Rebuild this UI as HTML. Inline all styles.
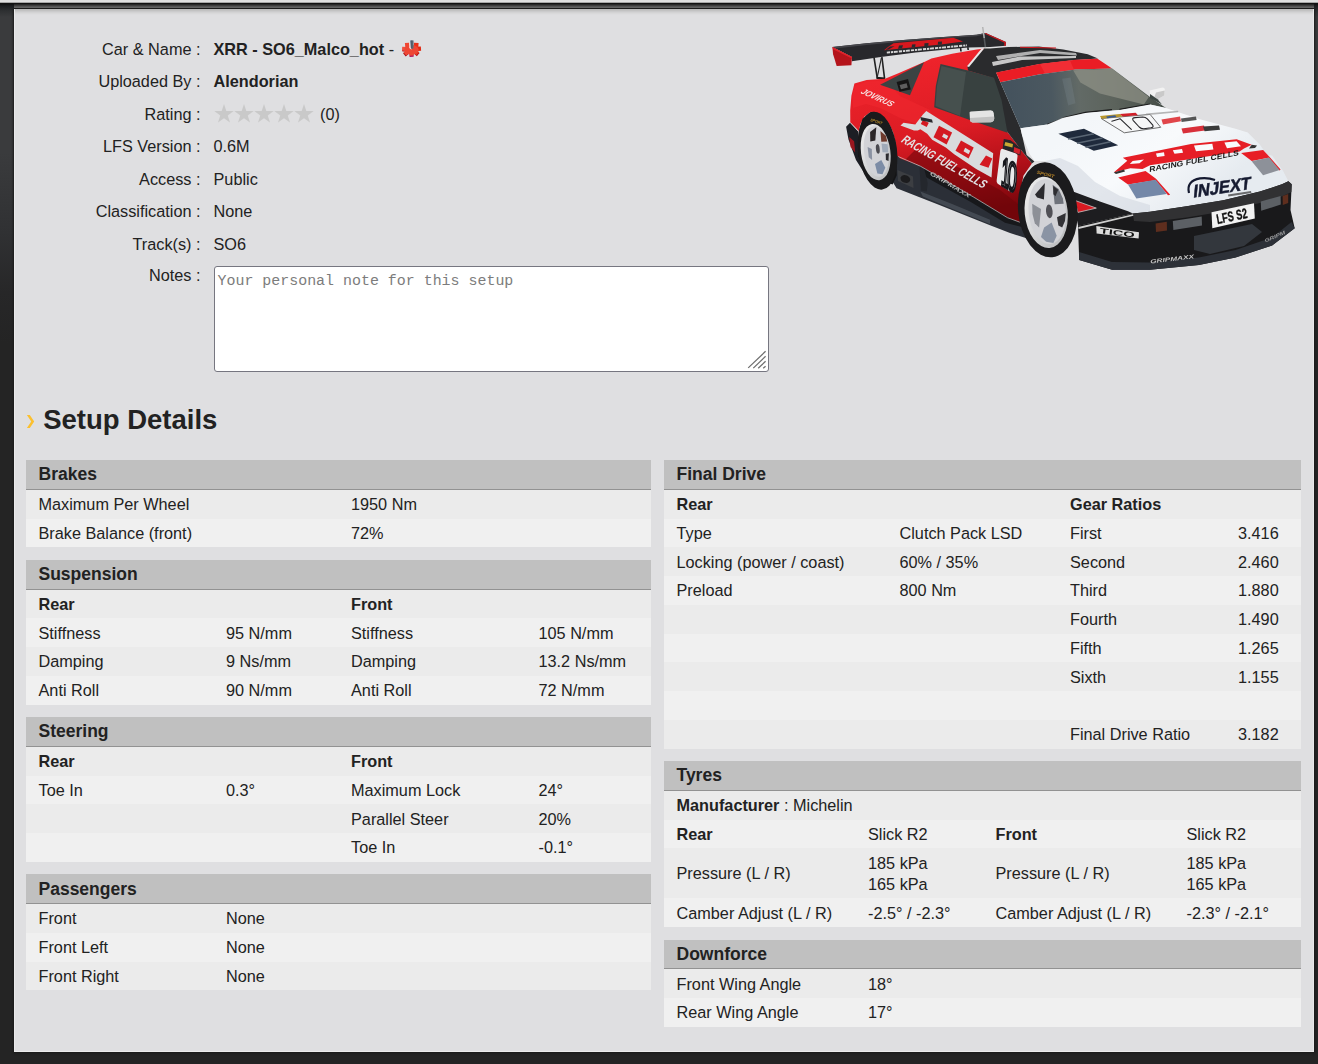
<!DOCTYPE html>
<html>
<head>
<meta charset="utf-8">
<title>Setup</title>
<style>
*{box-sizing:border-box;margin:0;padding:0}
html,body{width:1318px;height:1064px;overflow:hidden;background:#242424}
body{font-family:"Liberation Sans",sans-serif;font-size:16.25px;color:#222;position:relative;line-height:21.25px}
#topbar{position:absolute;z-index:3;left:0;top:0;width:1318px;height:4px;background:linear-gradient(to bottom,#dedede 0px,#dedede 1px,#e0e0e0 1px,#e0e0e0 2px,#a6a6a6 2px,#a6a6a6 3px,#111 3px,#111 4px)}
#topbar2{position:absolute;z-index:3;left:14px;top:4px;width:1300px;height:5px;background:linear-gradient(to bottom,#282828 0px,#282828 1px,#3d3d3d 1px,#3d3d3d 2px,#535353 2px,#535353 3px,#616161 3px,#616161 4px,#1c1c1c 4px,#1c1c1c 5px)}
#lstrip{position:absolute;left:0;top:3px;width:14px;height:1061px;background:linear-gradient(to bottom,#0a0a0a 0,#1c1e20 3px,#2e3032 8px,#3a3b3d 14px,#3a3b3d 150px,#303133 230px,#272728 290px,#242424 340px,#242424 100%)}
#rstrip{position:absolute;left:1314px;top:3px;width:4px;height:1061px;background:linear-gradient(to bottom,#0a0a0a 0,#1c1e20 3px,#2e3032 8px,#3a3b3d 14px,#3a3b3d 150px,#303133 230px,#272728 290px,#242424 340px,#242424 100%)}
#content{position:absolute;left:14px;top:9px;width:1300px;height:1043px;background:#dfdfe1;border-left:1px solid #e9e9ea;border-right:1px solid #e9e9ea;border-bottom:1px solid #ececed;box-shadow:0 0 2px 1px #1a1a1a}
#cshadow{position:absolute;left:15px;top:9px;width:1298px;height:6px;background:linear-gradient(to bottom,#bcbcbc 0px,#bcbcbc 1px,#c2c2c2 1px,#c2c2c2 2px,#cbcbcc 2px,#cbcbcc 3px,#d3d3d4 3px,#d3d3d4 4px,#d9d9da 4px,#d9d9da 5px,#dddddf 5px,#dddddf 6px)}
.lbl{position:absolute;left:14px;width:186.5px;text-align:right;white-space:nowrap}
.val{position:absolute;left:213.5px;white-space:nowrap}
b{font-weight:bold}
#notes{position:absolute;left:214px;top:266px;width:555px;height:105.5px;background:#fff;border:1px solid #767680;border-radius:3px}
#notes span{position:absolute;left:2.5px;top:4.4px;font-family:"Liberation Mono",monospace;font-size:14.95px;color:#7c7c7c;white-space:nowrap;line-height:20px}
h2{position:absolute;left:43.2px;top:403px;font-size:27.5px;line-height:34px;font-weight:bold;color:#222;white-space:nowrap}
h2 i{font-style:normal;color:#f7b32b;font-weight:bold;margin-right:6px}
table{position:absolute;border-collapse:separate;border-spacing:0;table-layout:fixed}
table.l{left:26px;width:625px}
table.r{left:664px;width:637px}
th{background:#c0c0c0;height:29.6875px;text-align:left;padding:0 12.5px 0.3px 12.5px;font-size:17.5px;font-weight:bold;border-bottom:1px solid #929292;vertical-align:middle;line-height:20px}
td{height:28.75px;padding:4.25px 0 3.25px 12.5px;line-height:21.25px;vertical-align:middle;white-space:nowrap;overflow:hidden}
tr.a td{background:#ebebeb}
tr.b td{background:#f0f0f0}
</style>
</head>
<body>
<div id="topbar"></div><div id="topbar2"></div>
<div id="lstrip"></div>
<div id="rstrip"></div>
<div id="content"></div>
<div id="cshadow"></div>

<div class="lbl" style="top:38.5px">Car &amp; Name :</div><div class="val" style="top:38.5px"><b>XRR - SO6_Malco_hot</b> -</div>
<div class="lbl" style="top:71px">Uploaded By :</div><div class="val" style="top:71px"><b>Alendorian</b></div>
<div class="lbl" style="top:103.5px">Rating :</div><div class="val" style="top:103.5px;left:320px">(0)</div>
<div class="lbl" style="top:136px">LFS Version :</div><div class="val" style="top:136px">0.6M</div>
<div class="lbl" style="top:168.5px">Access :</div><div class="val" style="top:168.5px">Public</div>
<div class="lbl" style="top:201px">Classification :</div><div class="val" style="top:201px">None</div>
<div class="lbl" style="top:233.5px">Track(s) :</div><div class="val" style="top:233.5px">SO6</div>
<div class="lbl" style="top:265px">Notes :</div>
<div id="notes"><span>Your personal note for this setup</span></div>

<svg style="position:absolute;left:210px;top:98px" width="110" height="32" viewBox="210 98 110 32"><g fill="#c9c9c9"><polygon points="224.00,104.00 226.32,111.00 233.70,111.05 227.76,115.42 230.00,122.45 224.00,118.15 218.00,122.45 220.24,115.42 214.30,111.05 221.68,111.00"/><polygon points="244.00,104.00 246.32,111.00 253.70,111.05 247.76,115.42 250.00,122.45 244.00,118.15 238.00,122.45 240.24,115.42 234.30,111.05 241.68,111.00"/><polygon points="264.00,104.00 266.32,111.00 273.70,111.05 267.76,115.42 270.00,122.45 264.00,118.15 258.00,122.45 260.24,115.42 254.30,111.05 261.68,111.00"/><polygon points="284.00,104.00 286.32,111.00 293.70,111.05 287.76,115.42 290.00,122.45 284.00,118.15 278.00,122.45 280.24,115.42 274.30,111.05 281.68,111.00"/><polygon points="304.00,104.00 306.32,111.00 313.70,111.05 307.76,115.42 310.00,122.45 304.00,118.15 298.00,122.45 300.24,115.42 294.30,111.05 301.68,111.00"/></g></svg>
<svg style="position:absolute;left:396px;top:36px" width="32" height="26" viewBox="396 36 32 26"><defs><linearGradient id="gp" x1="0" y1="0" x2="1" y2="0"><stop offset="0" stop-color="#8aa6ba"/><stop offset="0.4" stop-color="#505c68"/><stop offset="1" stop-color="#5f6f7c"/></linearGradient></defs><g stroke-width="4.1" fill="none"><path d="M411.5 52 L411.6 56.9" stroke="#b3105a"/><path d="M409 51 L404.4 54.9" stroke="#a80c14"/><path d="M414 51 L418.2 54.6" stroke="#b8101a"/><path d="M411.5 51.2 L411.6 55.6" stroke="#f04a36"/><path d="M409 50.6 L404.9 54.0" stroke="#ee4a38"/><path d="M414 50.6 L417.8 53.8" stroke="#e8381e"/><path d="M408 49.2 L402.1 49.0" stroke="#ef5040" stroke-width="4.4"/><path d="M415 49.0 L421.0 48.6" stroke="#e02a12" stroke-width="4.4"/><path d="M404.9 43.1 L409.2 42.7 L409.6 48 L405.4 48.6Z" fill="#f04632" stroke="none"/><path d="M413.9 42.7 L418.6 43.1 L418.2 48.6 L413.7 48Z" fill="#ea3018" stroke="none"/></g><ellipse cx="411.5" cy="49.8" rx="7.2" ry="4.8" fill="#ee4634"/><path d="M402.4 50.6 L404.6 50.9 L404.6 51.6 L402.4 51.2Z" fill="#9a0a1a"/><path d="M409.2 42.6 L409.2 47.6 Q409.5 49.5 411.6 49.4 L411.6 42.6 Z" fill="#f8dcd6"/><path d="M409.9 40.6 Q411.8 39.7 413.6 40.6 L413.5 48.3 Q411.9 49.4 410.8 48.3 Z" fill="url(#gp)"/></svg>
<svg style="position:absolute;left:744px;top:347px" width="24" height="24" viewBox="744 347 24 24"><g stroke="#6e6e6e" stroke-width="1.25" fill="none"><path d="M748.2 367.9 L765.6 351.3"/><path d="M753.3 368.1 L765.6 356.3"/><path d="M758.2 368.3 L765.6 361.3"/><path d="M763.2 368.3 L765.6 366.2"/></g></svg>
<svg style="position:absolute;left:20px;top:405px" width="30" height="30" viewBox="20 405 30 30"><polygon points="26.9,414.9 29.8,414.9 34.2,421.45 29.8,428 26.9,428 31.2,421.45" fill="#fbc02f"/></svg>
<h2>Setup Details</h2>

<!--CAR-->
<svg id="car" style="position:absolute;left:820px;top:20px;filter:blur(0.45px)" width="494" height="270" viewBox="820 20 494 270">
<defs>
<linearGradient id="redb" gradientUnits="userSpaceOnUse" x1="930" y1="60" x2="960" y2="215"><stop offset="0" stop-color="#ee232b"/><stop offset="0.45" stop-color="#dc1c24"/><stop offset="0.75" stop-color="#b01018"/><stop offset="1" stop-color="#7a060c"/></linearGradient>
<linearGradient id="hood" gradientUnits="userSpaceOnUse" x1="1100" y1="110" x2="1180" y2="215"><stop offset="0" stop-color="#f3f6f9"/><stop offset="0.5" stop-color="#f8fafc"/><stop offset="1" stop-color="#e6ebf0"/></linearGradient>
<linearGradient id="wind" gradientUnits="userSpaceOnUse" x1="1005" y1="100" x2="1160" y2="90"><stop offset="0" stop-color="#44525d"/><stop offset="0.3" stop-color="#4b5860"/><stop offset="0.48" stop-color="#626a66"/><stop offset="0.7" stop-color="#5c635c"/><stop offset="0.9" stop-color="#4e5650"/><stop offset="1" stop-color="#464e48"/></linearGradient>
<linearGradient id="rim" x1="0" y1="0" x2="1" y2="1"><stop offset="0" stop-color="#f2f2f2"/><stop offset="1" stop-color="#b4b6b8"/></linearGradient>
<linearGradient id="bump" gradientUnits="userSpaceOnUse" x1="0" y1="200" x2="0" y2="270"><stop offset="0" stop-color="#2c2c2e"/><stop offset="0.5" stop-color="#1a1a1c"/><stop offset="1" stop-color="#30343a"/></linearGradient>
</defs>

<!-- antenna -->

<!-- wing struts -->
<g stroke="#222" stroke-width="1.6" fill="none"><path d="M874 57.4 L877.2 77.5"/><path d="M881.9 57 L884.6 78.7"/><path d="M881.4 57.8 L877.4 76.5" stroke-width="1.1"/><path d="M960.6 48 L961 51.5"/><path d="M967.8 47.2 L968.2 50"/></g>
<path d="M876.4 76.7 L885 77.6 L885 79.8 L876.4 79Z" fill="#1c1c1c"/>
<!-- rear wing -->
<path d="M832.4 47 L866.6 43.3 L903.3 39.9 L939.9 37.2 L976.6 34.8 L985.6 32.9 L1006 42 L1005.8 45.8 L990 47 L968 47.6 L952 48.9 L915.5 52.4 L878.9 57.3 L852 61.3 L852 57Z" fill="#28282c"/>
<path d="M832.4 47 L866.6 43.3 L903.3 39.9 L939.9 37.2 L976.6 34.8 L985.6 32.9 L987.6 33.8 L976.6 36.2 L939.9 38.6 L903.3 41.4 L866.6 44.9 L835 48.4Z" fill="#45454a"/>
<path d="M985.6 32.9 L1006 42 L1005.8 45.8 L1004.2 45.9 L1004.4 42.8 L984.8 33.8Z" fill="#d01a20"/>
<!-- wing decals -->
<path d="M893.5 43.3 L953.4 37.7 L963 41.4 L943 44.2 L884 50.2 L888 47 Z" fill="#d8181e"/>
<g fill="#2a2a2e"><path d="M899 45.6 L903 45.2 L902 48.4 L898 48.8Z"/><path d="M912 44.6 L915.5 44.2 L915.2 47 L911.6 47.4Z"/><path d="M924.5 43.3 L928.5 42.9 L928.3 45.8 L924.3 46.2Z"/><path d="M938 41.8 L942 41.4 L941.8 44.4 L937.8 44.8Z"/><path d="M890 46.6 L894.5 46.2 L888.5 49.6 L885.5 49.9Z"/></g>
<path d="M886.8 52.6 L966.9 45.3" stroke="#d6d6d6" stroke-width="1.9" stroke-dasharray="3.2 0.9 2.2 0.7 4 1.1" fill="none"/>
<path d="M982.7 27 L984.2 38" stroke="#b4b4b4" stroke-width="1.5" fill="none"/><path d="M984.2 38 L985.4 47.2" stroke="#55585c" stroke-width="1.6" fill="none"/>
<!-- endplate -->
<path d="M832.4 47 L852 57 L851.4 65.3 L836.7 65.9 L833.1 54.3Z" fill="#b4141b"/>
<path d="M832.4 47 L852 57 L851.9 58.6 L833 49.2Z" fill="#e0222a"/>

<!-- rear bumper (black) -->
<path d="M846.1 126.8 L850.3 122.6 L857.9 131.0 L860.7 147.0 L868.2 175.2 L864.4 173.3 L856.0 160.1 L848.5 139.5Z" fill="#1c1e24"/>
<!-- lower skirt -->
<path d="M893 150 L898.4 156.2 L920.8 166 L973.3 196.5 L1007.5 217.3 L1024 222 L1032 240 L1010 233 L990 225.2 L940 205.3 L896.6 188.2 L889 176Z" fill="#2b2f37"/>
<path d="M920.2 164.7 L973.3 195.9 L1007.5 216.6 L1023.4 222.1 L1022.1 227.0 L1005.0 222.7 L970.8 202.0 L924.4 176.3Z" fill="#17181b"/>
<path d="M920.4 191.6 L952.1 203.9 L990.0 219.7 L990.0 224.0 L952.1 208.7 L922.8 196.5Z" fill="#4a5059" opacity="0.8"/>
<path d="M918.9 157.4 L921.8 158.2 L927.7 183.1 L926.7 191.6 L921.0 190.4Z" fill="#24272d"/>
<!-- red body -->
<path d="M854.4 83.6 L866.6 80 L885 78.7 L898.4 73.2 L925.3 61.6 L931.4 58.6 L952.1 53.7 L976.6 49.4 L984 48.6 L992 60 L996 72 L1000 90 L1006.3 130.5 L1022.1 151.3 L1031.9 163.5 L1023.4 175.7 L1020.3 192.8 L1019.1 209.9 L1021.5 222.6 L1007.5 217.3 L973.3 196.5 L920.8 166 L900 158.6 L898.4 156.2 L896.4 156 L895.4 142.3 L893 132 L888.9 123.5 L880.5 115 L871 111.7 L864.5 116.5 L860.5 124 L858.8 131 L850.3 122.5 L850.2 110.5 L851.4 95.8Z" fill="url(#redb)"/>
<!-- bright highlight on rear fender -->
<path d="M855 86 L866.6 81.5 L885 80.5 L900 96 L930 110 L933 130 L900 118 L880 108 L866 104 L853 108 L852.5 96Z" fill="#f0282f" opacity="0.55"/>
<!-- dark lower door -->
<path d="M915 150 L960 168 L1000 190 L1019 205 L1021.5 222.6 L1007.5 217.3 L973.3 196.5 L920.8 166 L905 160Z" fill="#6c050a" opacity="0.55"/>
<path d="M898.4 156.6 L920.8 166.4 L973.3 196.9 L1007.5 217.7 L1021 222.6" stroke="#d8d8d8" stroke-width="0.8" fill="none" opacity="0.8"/>
<!-- rear wheel well + tire -->
<path d="M858.8 131.0 L862.6 118.8 L871.0 111.7 L880.4 115.0 L888.9 123.5 L895.4 142.3 L896.4 155.4 L896.8 175.2 L892.6 184.6 L868.2 175.2 L858.3 156.4Z" fill="#141416"/>
<ellipse cx="877.6" cy="150.7" rx="19.4" ry="39.2" fill="#1a1a1c" transform="rotate(-6.9 877.6 150.7)"/>
<ellipse cx="875.7" cy="152.1" rx="14.7" ry="28.4" fill="url(#rim)" transform="rotate(-7.6 875.7 152.1)"/>
<ellipse cx="876.3" cy="151.6" rx="12.2" ry="25.4" fill="#d2d3d7" transform="rotate(-7.6 876.3 151.6)"/>
<path d="M870.1 132.1 L876.3 127.2 L875.3 140.6 L870.3 141.5Z" fill="#2a2628"/>
<path d="M880.4 131.0 L885.9 135.7 L887.2 141.5 L881.3 141.7Z" fill="#6e3a2c"/>
<path d="M881.5 143.4 L887.7 144.2 L888.3 152.6 L882.5 152.2Z" fill="#a0aab8"/>
<path d="M885.7 153.7 L888.9 153.2 L888.5 161.1 L885.9 160.1Z" fill="#2c2c30"/>
<path d="M875.0 164.1 L881.3 160.1 L885.3 167.8 L882.5 174.2 L877.4 173.5Z" fill="#7c8ca6"/>
<path d="M867.6 147.0 L871.8 148.9 L872.1 160.1 L868.8 157.3Z" fill="#8a92a2"/>
<ellipse cx="877.8" cy="148.9" rx="1.9" ry="4.8" fill="#4a4a50" transform="rotate(-6 877.8 148.9)"/>
<text transform="translate(869.9 120.9) rotate(17)" font-family="Liberation Sans" font-weight="bold" font-style="italic" font-size="4" fill="#b08828" textLength="12.5" lengthAdjust="spacingAndGlyphs">SPORT</text>
<path d="M850.1 122.4 L857.9 130.8" stroke="#d8d8d8" stroke-width="0.9" fill="none"/>
<path d="M849.2 137.1 L854.1 141.3 L855.2 152.6 L850.5 147.0Z" fill="#b0161e" opacity="0.85"/>
<!-- quarter window -->
<path d="M880.1 84.8 L924 62.3 L910 95.2Z" fill="#3b4343"/>
<path d="M896.6 82 L908 79 L910.8 89.6 L899.5 91.8Z" fill="#151515"/>
<path d="M899.6 85 L906.6 83.2 L907.8 87.6 L901 89.2Z" fill="#9a9a9a" opacity="0.55"/>
<!-- roof black -->
<path d="M984 48.6 L990 48.6 L1008.3 47 L1038.9 46.4 L1063.3 49.4 L1087.7 54.3 L1098 58.6 L1075.5 59.9 L1038.9 64.2 L996.1 72.8 L1000.4 82.2 L1020.5 128.2 L1026.6 155 L1034.4 161.5 L1031.9 163.5 L1022.1 151.3 L1006.3 130.5 L1000 100 L993 78 L968 70.5 L967.5 66.5 Z" fill="#2a2b2d"/>
<path d="M981.8 48.3 L984.2 48.6 L969 67 L967 66.2Z" fill="#e8e8e8"/>
<!-- roof decals -->
<path d="M996 56 L1040 50 L1076 53 L1077 55.5 L1040 53 L998 60Z" fill="#c8c8c8" opacity="0.85"/>
<path d="M992 62 L1020 56.5 L1076 56 L1076 58 L1022 60 L993 66Z" fill="#d8d8d8" opacity="0.9"/>
<path d="M1020 46.7 L1056 47.6 L1056 48.6 L1020 47.8Z" fill="#d21a20"/>
<!-- door window -->
<path d="M940.5 64.1 L968 70.5 L994 77.8 L1001.5 100 L1007.5 132.8 L968.4 119.5 L934.2 107.3 L935.8 86Z" fill="#384140"/>
<path d="M941.5 66 L966 72 L960 116 L935.5 106 L937 86Z" fill="#46504e"/>
<!-- red banner -->
<path d="M996.1 72.6 L1038.9 64.1 L1075.5 59.8 L1097.5 58.8 L1112.1 68.4 L1075.5 69.6 L1038.9 74.5 L1000.4 82.2Z" fill="#ea1d25"/>
<path d="M1040 64 L1070 60.4 L1074 69.8 L1045 73.6Z" fill="#f4343a" opacity="0.7"/>
<!-- windshield -->
<path d="M1000.4 82.2 L1038.9 74.5 L1075.5 69.6 L1112.1 68.4 L1150 97.1 L1165.9 108 L1150 104.4 L1119.5 109.9 L1085.3 112.9 L1063.3 117.8 L1047.4 124.5 L1020.5 128.2Z" fill="url(#wind)"/>
<path d="M1073.1 70.2 L1112.1 68.7 L1148.8 97.1 L1143.9 104.4 L1099.9 93.4 L1080.4 82.4Z" fill="#8e9086" opacity="0.75"/><path d="M1062.1 78.7 L1070.6 77.5 L1075.5 103.2 L1068.2 105.6Z" fill="#8a9aa4" opacity="0.2"/>
<!-- wipers -->
<g stroke="#1c1c1c" stroke-width="1.4" fill="none"><path d="M1047.4 124.5 L1063.3 118.6 L1085 113.8"/><path d="M1063 118 L1085.3 112.4 L1112 109.6"/><path d="M1119.5 109.5 L1150 104.2"/></g>

<!-- white hood -->
<path d="M1020.5 128.2 L1047.4 124.5 L1063.3 117.8 L1085.3 112.9 L1119.5 109.9 L1150 104.4 L1165.9 108 L1198.9 119 L1235.5 128.8 L1247.7 132.5 L1259.9 144.7 L1267.3 155 L1272.1 155.4 L1283.1 170.9 L1288.4 181.3 L1281.9 184.5 L1259.9 191.8 L1223.3 200.4 L1186.6 206.5 L1150 212 L1132.9 213.6 L1128 211.2 L1099.9 201.4 L1073 191.6 L1068.2 179.4 L1058.4 167.2 L1045 161.1 L1034.4 161 L1029.5 153.7 L1022 135Z" fill="url(#hood)"/>
<!-- fender shading -->
<path d="M1045 161.1 L1058.4 167.2 L1068.2 179.4 L1073 191.6 L1099.9 201.4 L1128 211.2 L1132.9 213.6 L1150 212 L1150 205 L1120 196 L1095 182 L1078 166 L1060 158Z" fill="#cfd6de" opacity="0.55"/>
<!-- hood vent -->
<path d="M1058.4 133.7 L1084 128.8 L1118.2 145.3 L1093.8 150.8Z" fill="#1f2a3c"/>
<g stroke="#5a6674" stroke-width="1.5"><path d="M1068 139 L1094 133.8"/><path d="M1077 143.2 L1102.5 138"/><path d="M1085.5 147.2 L1110.6 141.8"/></g>
<!-- hood number plate -->
<path d="M1101.2 118.5 L1150.1 114.4 L1160.7 127.3 L1124.3 132.8Z" fill="#f6f7f8" stroke="#4a4a4a" stroke-width="0.8"/>
<path d="M1100.0 115.9 L1119.7 114.0 L1122.8 116.4 L1101.5 118.8Z" fill="#b8962c"/><path d="M1119.7 114.0 L1135.7 112.7 L1137.9 115.2 L1122.8 116.4Z" fill="#d0202a"/><path d="M1106.1 116.4 L1115.2 115.2 L1116.4 117.0 L1107.3 118.2Z" fill="#3a5a90"/>
<g stroke="#26262a" stroke-width="1.1" fill="none" stroke-linejoin="round" stroke-linecap="round"><path d="M1111.8 121.2 L1120.0 118.7 L1131.3 129.4"/><path d="M 1135.2 117.6 L 1142.8 117.0 Q 1145.5 117.0 1147.3 118.8 L 1152.8 125.2 Q 1154.0 127.3 1150.8 127.8 L 1144.0 128.7 Q 1141.0 128.8 1139.2 127.0 L 1133.1 120.3 Q 1131.6 117.9 1135.2 117.6 Z"/></g>
<!-- small logos -->
<path d="M1146 113.6 L1178 110.8 L1178.4 112.2 L1146.4 115.2Z" fill="#999" opacity="0.7"/>
<path d="M1161.5 119.5 L1180 116.5 L1181 121.2 L1163 124.4Z" fill="#e0454a"/><path d="M1181 118.4 L1196 116.6 L1196.6 120 L1181.6 122Z" fill="#555"/>
<path d="M1181.5 128.5 L1204 125.5 L1205 130.6 L1183 133.6Z" fill="#d8303a"/><path d="M1203 126.4 L1219 125.6 L1220 129.8 L1204.6 131.2Z" fill="#3a3a3a"/>

<!-- hood ATT red -->
<path d="M1122.8 157.7 L1191 144 L1236.6 139.2 L1251.7 144.8 L1244 148.6 L1239.6 151.6 L1150 165.3 L1142.5 169 L1130.3 168.3 L1113.7 172.5 L1127.3 160.7Z" fill="#e61e26"/>
<g fill="#f8fafc"><path d="M1132.6 161 L1144 159.4 L1139.5 163.2 L1129.8 164Z"/><path d="M1172.8 150.2 L1182 149 L1183 152.7 L1174.5 153.8Z"/><path d="M1194 145.6 L1212.3 143.7 L1213.4 149.6 L1196 151.3Z"/><path d="M1224.4 142.6 L1236.6 141.2 L1241 146.2 L1227 148.2Z"/><path d="M1156 153.5 L1164 152.3 L1164.6 156 L1157 157Z"/></g>
<path d="M1251.7 144.8 L1257 145.5 L1255 148 L1249 148.4Z" fill="#333"/><path d="M1113.7 172.5 L1124 169.4 L1125 171.6 L1116 174Z" fill="#333"/>
<text transform="translate(1149.3 172) rotate(-10.6) skewX(-12)" font-family="Liberation Sans" font-weight="bold" font-size="7.5" fill="#1c1c1c" textLength="91" lengthAdjust="spacingAndGlyphs">RACING FUEL CELLS</text>
<!-- headlights + red blocks -->
<path d="M1118.2 177.4 L1145.5 171 L1156 178.8 L1170.2 194.8 L1168 195.2 L1155.4 180.2 L1128 184.4Z" fill="#e81e26"/>
<path d="M1128 184.4 L1155.6 179.8 L1166.8 194 L1136.4 198.4Z" fill="#7488a8"/>
<path d="M1241.1 153.1 L1263.1 150 L1269.4 156.8 L1280.6 169.6 L1279.2 170.4 L1268.6 157.8 L1251.7 160.9Z" fill="#e81e26"/>
<path d="M1251.7 161.2 L1269 157.6 L1279.6 170 L1263.1 175.2Z" fill="#8d9199"/>
<!-- INJEXT -->
<text transform="translate(1193 197.6) rotate(-8.5) skewX(-14)" font-family="Liberation Sans" font-weight="bold" font-size="17.5" fill="#151a30" stroke="#151a30" stroke-width="0.5" textLength="58" lengthAdjust="spacingAndGlyphs">INJEXT</text>
<path d="M1189 193 Q1186 181 1200 178.4 Q1208 177.4 1215 180" stroke="#151a30" stroke-width="2.2" fill="none"/>
<path d="M1228 194.6 L1251 191 L1251.4 193 L1228.4 196.6Z" fill="#333" opacity="0.7"/>

<!-- fender black stripe + red triangle -->
<path d="M1073 191.6 L1099.9 201.4 L1128 211.2 L1133 213.6 L1078.2 226 L1075.5 213Z" fill="#1d1d20"/>
<path d="M1074.3 200.2 L1096.3 208.1 L1077.9 212.4Z" fill="#d81a22" stroke="#c8c8c8" stroke-width="0.8"/>
<!-- front bumper -->
<path d="M1078 225.8 L1132.9 213.6 L1150 211.8 L1186.6 206.3 L1223.3 200.2 L1259.9 191.6 L1281.9 184.3 L1288.4 181.3 L1291.7 184.3 L1290.5 210 L1294.7 228.3 L1272.1 245.4 L1235.5 257.6 L1198.9 264.9 L1150 269.8 L1112.1 269.8 L1079.2 260Z" fill="#19191b"/>
<path d="M1132.9 213.6 L1150 211.8 L1186.6 206.3 L1223.3 200.2 L1259.9 191.6 L1281.9 184.3 L1288.4 181.3 L1291.7 184.3 L1291.4 192 L1283 196 L1259.9 203 L1223.3 211.4 L1186.6 217.6 L1150 222 L1134 221Z" fill="#313133"/>
<path d="M1078.4 227 L1133 214.2 L1133.4 215.8 L1078.6 229Z" fill="#cfcfcf"/>
<!-- splitter -->
<path d="M1079.2 252 L1112 262 L1150 262.6 L1198.9 257.6 L1235.5 250 L1272.1 237.6 L1291.5 222 L1294.7 228.3 L1272.1 245.4 L1235.5 257.6 L1198.9 264.9 L1150 269.8 L1112.1 269.8 L1079.2 260Z" fill="#2d3138"/>
<path d="M1194 236 L1252 224 L1262 232 L1244 246 L1210 254 L1194 250Z" fill="#33373d"/>
<!-- fog lights / indicators -->
<path d="M1172.8 221 L1201.7 216.6 L1202 225.6 L1173.4 230Z" fill="#5c6065"/>
<path d="M1260.8 201.6 L1280.6 196 L1280.8 204.6 L1261.2 210.8Z" fill="#5c6065"/>
<path d="M1155.6 223.4 L1166.8 221.8 L1167 230.4 L1156 232Z" fill="#5e2e1e"/>
<path d="M1282.6 196 L1288.2 194 L1288.2 203 L1282.8 205Z" fill="#5e2e1e"/>
<!-- license plate -->
<path d="M1211.5 212.3 L1254 203.2 L1254.8 218.4 L1212.3 228.2Z" fill="#f2f2f2"/>
<text transform="translate(1217.6 224.2) rotate(-12.4) skewX(-2)" font-family="Liberation Sans" font-weight="bold" font-size="14" fill="#111" stroke="#111" stroke-width="0.35" textLength="31" lengthAdjust="spacingAndGlyphs">LFS S2</text>
<!-- TICO -->
<path d="M1096.3 226 L1139 232.2 L1138.6 238.6 L1096.6 233.6Z" fill="#dcdcdc"/>
<text transform="translate(1099.6 233) rotate(7.6)" font-family="Liberation Sans" font-weight="bold" font-size="7.4" fill="#111" textLength="35" lengthAdjust="spacingAndGlyphs">TICO</text>
<!-- gripmaxx texts -->
<text transform="translate(1150.5 263.6) rotate(-7)" font-family="Liberation Sans" font-weight="bold" font-style="italic" font-size="5.6" fill="#c4c4c4" textLength="44" lengthAdjust="spacingAndGlyphs">GRIPMAXX</text>
<text transform="translate(1265.6 242.6) rotate(-24)" font-family="Liberation Sans" font-weight="bold" font-style="italic" font-size="5" fill="#9a9a9a" textLength="22" lengthAdjust="spacingAndGlyphs">GRIPM</text>

<!-- front wheel -->
<ellipse cx="1047.7" cy="209.8" rx="29.6" ry="47.6" fill="#1b1b1d" transform="rotate(-5.6 1047.7 209.8)"/>
<ellipse cx="1046.2" cy="212.4" rx="21.5" ry="35.8" fill="url(#rim)" transform="rotate(-5.6 1046.2 212.4)"/>
<ellipse cx="1047.2" cy="211.6" rx="18.6" ry="32.6" fill="#d2d3d7" transform="rotate(-5.6 1047.2 211.6)"/>
<path d="M1035.0 194.5 L1044.9 183.1 L1043.9 199.4 L1037.1 197.6Z" fill="#2b2b2f"/>
<path d="M1052.6 184.8 L1058.6 189.1 L1062.9 198.4 L1063.7 203.8 L1054.7 204.2Z" fill="#6f737b"/>
<path d="M1053.2 186.0 L1058.2 189.7 L1055.5 196.3 L1053.4 194.3Z" fill="#2e2e32"/>
<path d="M1057.0 217.2 L1065.8 212.9 L1065.0 221.1 L1062.2 227.4 L1058.4 225.5Z" fill="#323236"/>
<path d="M1044.1 227.4 L1051.6 222.4 L1056.7 235.8 L1053.4 242.9 L1046.2 241.8 L1041.0 236.9Z" fill="#8a94a4"/>
<path d="M1032.2 203.8 L1041.0 209.0 L1039.1 227.4 L1034.8 223.2 L1032.5 213.9Z" fill="#8d9097"/>
<ellipse cx="1049.3" cy="211.3" rx="3.3" ry="6.9" fill="#505056" transform="rotate(-5 1049.3 211.3)"/>
<text transform="translate(1036.4 173.6) rotate(14)" font-family="Liberation Sans" font-weight="bold" font-style="italic" font-size="4.6" fill="#b8862a" textLength="18" lengthAdjust="spacingAndGlyphs">SPORT</text>

<!-- door ATT logo (light grey) -->
<path d="M926.3 111.0 L993.2 153.3 L991.5 177.4 L976.2 169.0 L954.2 154.2 L945.8 147.4 L932.2 139.8 L927.2 133.8 L920.4 129.2 L917.8 130.5 L914.0 130.6 L900.5 125.6 L903.5 122.7 L915.3 124.4 L922.9 114.4Z" fill="#d9dbdd"/>
<g fill="#d41a22"><path d="M939.0 125.8 L952.1 132.6 L946.6 144.4 L933.5 137.2Z"/><path d="M961.0 140.6 L973.7 147.4 L968.6 158.4 L955.5 150.8Z"/><path d="M986.0 155.4 L992.3 158.4 L988.5 167.7 L979.6 164.7Z"/><path d="M922.9 119.9 L928.8 122.8 L926.7 127.1 L920.8 124.1Z"/></g>
<g fill="#d9dbdd"><path d="M943.7 133.4 L948.3 136.0 L946.6 139.3 L942.0 136.8Z"/><path d="M965.2 147.8 L970.3 150.8 L968.6 154.2 L963.5 151.2Z"/></g>
<text transform="translate(900.2 141.6) rotate(29.6) skewX(-14)" font-family="Liberation Sans" font-weight="bold" font-size="12.6" fill="#e2e3e5" textLength="95" lengthAdjust="spacingAndGlyphs">RACING FUEL CELLS</text>
<!-- door handle -->
<path d="M920.4 117 L932 119.6 L932.8 122.8 L921 120.6Z" fill="#2a2a2e"/>
<!-- door number -->
<path d="M1003.8 139.1 L1010.5 140.3 L1020.9 148.2 L1020.3 155.6 L1017.3 154.4 L1002.6 148.9Z" fill="#25262a"/>
<path d="M1005.3 142.1 L1013.0 144.0 L1012.4 147.6 L1004.4 145.4Z" fill="#c9aa34"/><path d="M1014.2 147.0 L1020.3 149.5 L1019.5 154.4 L1013.6 151.9Z" fill="#d2222c"/>
<path d="M 1002.8 148.9 L 1016.0 153.5 Q 1017.9 154.4 1017.5 156.4 L 1013.0 191.0 Q 1012.4 193.4 1010.5 191.8 L 997.7 183.7 Q 996.2 182.4 996.7 180.0 L 1000.4 150.7 Q 1000.9 148.6 1002.8 148.9 Z" fill="#e9eaeb"/>
<g font-family="Liberation Sans" font-size="42" fill="#f4f4f4" stroke="#16171c" stroke-width="2.3"><text vector-effect="non-scaling-stroke" transform="translate(1000.6 184.5) skewY(30) skewX(-4) scale(0.34 1)">1</text><text vector-effect="non-scaling-stroke" transform="translate(1006.6 187.9) skewY(30) skewX(-4) scale(0.40 1)">0</text></g>
<!-- mirror left -->
<path d="M969.6 113.2 Q969 111.6 971 111.4 L990.6 110.2 Q993.4 110.4 993.8 113 L994.2 118.4 Q994 121.6 991 122.2 L972.6 122.6 Q970.2 122.4 970 120Z" fill="#e4e4e4"/>
<path d="M970 118 L994.2 116.6 L994.2 118.4 Q994 121.6 991 122.2 L972.6 122.6 Q970.2 122.4 970 120Z" fill="#c2c2c2"/>
<!-- mirror right -->
<path d="M1149.6 90.6 L1162.6 87.6 Q1165 87.8 1164.9 90.6 L1164.2 95.4 L1157.6 99.2 L1150 94Z" fill="#f2f2f2"/><path d="M1156 92.6 L1164.7 90.4 L1164.2 95.4 L1157.6 99.2 L1154.4 96.8Z" fill="#c9c9c9"/><path d="M1150 94 L1157.6 99.2 L1162 104.6 L1150 98Z" fill="#3c4642"/>
<!-- skirt text, pieces -->
<path d="M897.5 170 L913 176.5 L913.5 188 L898 181Z" fill="#3c3e42"/>
<ellipse cx="905.4" cy="179" rx="5" ry="3.8" fill="#1c1c1e" transform="rotate(22 905.4 179)"/>
<text transform="translate(929.4 174.4) rotate(31)" font-family="Liberation Sans" font-weight="bold" font-style="italic" font-size="5.6" fill="#b8b8b8" textLength="46" lengthAdjust="spacingAndGlyphs">GRIPMAXX</text>
<!-- rear fender text -->
<text transform="translate(860 93) rotate(24) skewX(-20)" font-family="Liberation Sans" font-style="italic" font-weight="bold" font-size="8.5" fill="#f6e0e0" textLength="34" lengthAdjust="spacingAndGlyphs">JOVIRUS</text>
</svg>
<!--/CAR-->
<!--TABLES-->
<table class="l" style="top:460.28px">
<colgroup><col style="width:312.5px"><col></colgroup>
<tr><th colspan="2">Brakes</th></tr>
<tr class="a"><td>Maximum Per Wheel</td><td>1950 Nm</td></tr>
<tr class="b"><td>Brake Balance (front)</td><td>72%</td></tr>
</table>
<table class="l" style="top:559.9675px">
<colgroup><col style="width:187.5px"><col style="width:125px"><col style="width:187.5px"><col></colgroup>
<tr><th colspan="4">Suspension</th></tr>
<tr class="a"><td><b>Rear</b></td><td></td><td><b>Front</b></td><td></td></tr>
<tr class="b"><td>Stiffness</td><td>95 N/mm</td><td>Stiffness</td><td>105 N/mm</td></tr>
<tr class="a"><td>Damping</td><td>9 Ns/mm</td><td>Damping</td><td>13.2 Ns/mm</td></tr>
<tr class="b"><td>Anti Roll</td><td>90 N/mm</td><td>Anti Roll</td><td>72 N/mm</td></tr>
</table>
<table class="l" style="top:717.155px">
<colgroup><col style="width:187.5px"><col style="width:125px"><col style="width:187.5px"><col></colgroup>
<tr><th colspan="4">Steering</th></tr>
<tr class="a"><td><b>Rear</b></td><td></td><td><b>Front</b></td><td></td></tr>
<tr class="b"><td>Toe In</td><td>0.3&deg;</td><td>Maximum Lock</td><td>24&deg;</td></tr>
<tr class="a"><td></td><td></td><td>Parallel Steer</td><td>20%</td></tr>
<tr class="b"><td></td><td></td><td>Toe In</td><td>-0.1&deg;</td></tr>
</table>
<table class="l" style="top:874.3425px">
<colgroup><col style="width:187.5px"><col></colgroup>
<tr><th colspan="2">Passengers</th></tr>
<tr class="a"><td>Front</td><td>None</td></tr>
<tr class="b"><td>Front Left</td><td>None</td></tr>
<tr class="a"><td>Front Right</td><td>None</td></tr>
</table>
<table class="r" style="top:460.28px">
<colgroup><col style="width:223px"><col style="width:170.5px"><col style="width:168px"><col></colgroup>
<tr><th colspan="4">Final Drive</th></tr>
<tr class="a"><td><b>Rear</b></td><td></td><td><b>Gear Ratios</b></td><td></td></tr>
<tr class="b"><td>Type</td><td>Clutch Pack LSD</td><td>First</td><td>3.416</td></tr>
<tr class="a"><td>Locking (power / coast)</td><td>60% / 35%</td><td>Second</td><td>2.460</td></tr>
<tr class="b"><td>Preload</td><td>800 Nm</td><td>Third</td><td>1.880</td></tr>
<tr class="a"><td></td><td></td><td>Fourth</td><td>1.490</td></tr>
<tr class="b"><td></td><td></td><td>Fifth</td><td>1.265</td></tr>
<tr class="a"><td></td><td></td><td>Sixth</td><td>1.155</td></tr>
<tr class="b"><td></td><td></td><td></td><td></td></tr>
<tr class="a"><td></td><td></td><td>Final Drive Ratio</td><td>3.182</td></tr>
</table>
<table class="r" style="top:761.2175px">
<colgroup><col style="width:191.5px"><col style="width:127.5px"><col style="width:191px"><col></colgroup>
<tr><th colspan="4">Tyres</th></tr>
<tr class="a"><td colspan="4"><b>Manufacturer</b> : Michelin</td></tr>
<tr class="b"><td><b>Rear</b></td><td>Slick R2</td><td><b>Front</b></td><td>Slick R2</td></tr>
<tr class="a"><td>Pressure (L / R)</td><td>185 kPa<br>165 kPa</td><td>Pressure (L / R)</td><td>185 kPa<br>165 kPa</td></tr>
<tr class="b"><td>Camber Adjust (L / R)</td><td>-2.5&deg; / -2.3&deg;</td><td>Camber Adjust (L / R)</td><td>-2.3&deg; / -2.1&deg;</td></tr>
</table>
<table class="r" style="top:939.655px">
<colgroup><col style="width:191.5px"><col></colgroup>
<tr><th colspan="2">Downforce</th></tr>
<tr class="a"><td>Front Wing Angle</td><td>18&deg;</td></tr>
<tr class="b"><td>Rear Wing Angle</td><td>17&deg;</td></tr>
</table>
<!--/TABLES-->

</body>
</html>
